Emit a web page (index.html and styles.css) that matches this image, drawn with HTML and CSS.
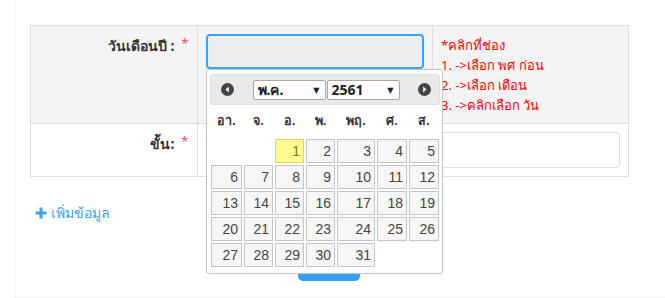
FILE: index.html
```html
<!DOCTYPE html>
<html lang="th">
<head>
<meta charset="utf-8">
<title>ฟอร์ม</title>
<link rel="stylesheet" href="styles.css">
</head>
<body>
<div class="box">
  <table class="form-table">
    <colgroup>
      <col class="c-label">
      <col class="c-field">
      <col class="c-help">
    </colgroup>
    <tr class="row-gray">
      <td class="cell label">วันเดือนปี :<span class="req">*</span></td>
      <td class="cell field">
        <div class="picker-wrap">
          <div class="input input-focus"></div>
          <div class="datepicker">
            <div class="dp-head">
              <svg class="dp-nav" width="13" height="13" viewBox="0 0 13 13"><circle cx="6.5" cy="6.5" r="6.5" fill="#444"/><path d="M7.8 3.6 L4.6 6.5 L7.8 9.4 Z" fill="#fff"/></svg>
              <div class="dp-selects">
                <div class="dp-select"><span>พ.ค.</span><span class="arrow">▼</span></div>
                <div class="dp-select"><span>2561</span><span class="arrow">▼</span></div>
              </div>
              <svg class="dp-nav" width="13" height="13" viewBox="0 0 13 13"><circle cx="6.5" cy="6.5" r="6.5" fill="#444"/><path d="M5.2 3.6 L8.4 6.5 L5.2 9.4 Z" fill="#fff"/></svg>
            </div>
            <table class="dp-cal">
              <colgroup>
                <col class="w33"><col class="w31"><col class="w31"><col class="w31"><col class="w40"><col class="w32"><col class="w32">
              </colgroup>
              <thead>
                <tr><th>อา.</th><th>จ.</th><th>อ.</th><th>พ.</th><th>พฤ.</th><th>ศ.</th><th>ส.</th></tr>
              </thead>
              <tbody>
                <tr><td></td><td></td><td><a class="day today">1</a></td><td><a class="day">2</a></td><td><a class="day">3</a></td><td><a class="day">4</a></td><td><a class="day">5</a></td></tr>
                <tr><td><a class="day">6</a></td><td><a class="day">7</a></td><td><a class="day">8</a></td><td><a class="day">9</a></td><td><a class="day">10</a></td><td><a class="day">11</a></td><td><a class="day">12</a></td></tr>
                <tr><td><a class="day">13</a></td><td><a class="day">14</a></td><td><a class="day">15</a></td><td><a class="day">16</a></td><td><a class="day">17</a></td><td><a class="day">18</a></td><td><a class="day">19</a></td></tr>
                <tr><td><a class="day">20</a></td><td><a class="day">21</a></td><td><a class="day">22</a></td><td><a class="day">23</a></td><td><a class="day">24</a></td><td><a class="day">25</a></td><td><a class="day">26</a></td></tr>
                <tr><td><a class="day">27</a></td><td><a class="day">28</a></td><td><a class="day">29</a></td><td><a class="day">30</a></td><td><a class="day">31</a></td><td></td><td></td></tr>
              </tbody>
            </table>
          </div>
        </div>
      </td>
      <td class="cell help">
        <div>*คลิกที่ช่อง</div>
        <div>1. -&gt;เลือก พศ ก่อน</div>
        <div>2. -&gt;เลือก เดือน</div>
        <div>3. -&gt;คลิกเลือก วัน</div>
      </td>
    </tr>
    <tr>
      <td class="cell label">ขั้น:<span class="req">*</span></td>
      <td class="cell field" colspan="2"><div class="input"></div></td>
    </tr>
  </table>
  <a class="add-link"><svg class="plus" width="12" height="12" viewBox="0 0 12 12"><path d="M6 0.5 V11.5 M0.5 6 H11.5" stroke="#3aa0f3" stroke-width="3"/></svg>เพิ่มข้อมูล</a>
  <div class="actions"><button class="btn" aria-label="บันทึก"></button></div>
</div>
</body>
</html>
```
FILE: styles.css
```css
body {
  margin: 0;
  background: #fff;
  font-family: Tahoma, "Noto Sans", "DejaVu Sans", sans-serif;
  font-size: 14px;
  color: #333;
}
.box {
  width: 614px;
  margin-left: 15px;
  padding: 25px 23px 16px 14px;
  border: 1px solid #f6f6f6;
  border-top: none;
  border-bottom-color: #eeeeee;
}
.form-table {
  width: 598px;
  table-layout: fixed;
  border-collapse: collapse;
  border: 1px solid #ddd;
}
.c-label { width: 167px; }
.c-field { width: 235px; }
.c-help { width: 196px; }
.cell {
  border: 1px solid #ddd;
  padding: 8px;
  vertical-align: top;
}
.row-gray > .cell { background: #f4f4f4; }
.label {
  text-align: right;
  font-weight: bold;
  line-height: 20px;
  padding-right: 9px;
}
.req {
  color: #f44;
  font-weight: normal;
  font-size: 12px;
  margin-left: 7px;
  vertical-align: 3px;
}
.help {
  color: #f00;
  font-size: 13px;
  line-height: 20px;
  padding-top: 9px;
}
.field { padding-top: 8px; }
.picker-wrap { position: relative; }
.input {
  height: 36px;
  box-sizing: border-box;
  border: 1px solid #ddd;
  border-radius: 4px;
  background: #fff;
}
.input-focus {
  height: 35px;
  border: 2px solid #38a2f5;
  background: #eee;
}
.datepicker {
  position: absolute;
  z-index: 10;
  top: 35px;
  left: 0;
  width: 237px;
  box-sizing: border-box;
  padding: 4px 2px 0 3px;
  background: #fff;
  border: 1px solid #c5c5c5;
  border-radius: 3px;
}
.dp-head {
  display: flex;
  align-items: center;
  justify-content: space-between;
  height: 29px;
  padding: 0 8px 0 10px;
  background: #e9e9e9;
  border: 1px solid #ddd;
  border-radius: 3px;
}
.dp-selects { display: flex; gap: 1px; }
.dp-select {
  width: 73px;
  height: 20px;
  box-sizing: border-box;
  display: flex;
  align-items: center;
  justify-content: space-between;
  padding: 0 5px 0 4px;
  background: #fff;
  border: 1px solid #a9a9a9;
  border-radius: 2px;
  font-weight: bold;
  font-size: 14px;
  color: #222;
}
.arrow { font-size: 8px; color: #222; font-weight: normal; }
.dp-cal {
  width: 230px;
  table-layout: fixed;
  border-collapse: collapse;
  margin: 0 0 5px;
}
.w33 { width: 33px; }
.w31 { width: 31px; }
.w40 { width: 40px; }
.w32 { width: 32px; }
.dp-cal th {
  padding: 8px 0 9px;
  font-size: 12.6px;
  font-weight: bold;
  text-align: center;
  color: #333;
  line-height: 16px;
}
.dp-cal td { padding: 1px; }
.day {
  display: block;
  height: 24px;
  box-sizing: border-box;
  padding: 3px 3px 0;
  text-align: right;
  font-family: "Liberation Sans", Arial, sans-serif;
  font-size: 14px;
  line-height: 17px;
  color: #454545;
  background: #f6f6f6;
  border: 1px solid #c5c5c5;
}
.today {
  background: #fffa90;
  border-color: #dad55e;
  color: #777620;
}
.add-link {
  display: flex;
  align-items: center;
  gap: 4px;
  margin: 25px 0 0 5px;
  color: #3aa0f3;
  font-size: 14px;
  line-height: 22px;
}
.actions {
  display: flex;
  justify-content: center;
  width: 598px;
  margin-top: 23px;
}
.btn {
  width: 62px;
  height: 34px;
  border: none;
  border-radius: 5px;
  background: #33a0f3;
}
```
